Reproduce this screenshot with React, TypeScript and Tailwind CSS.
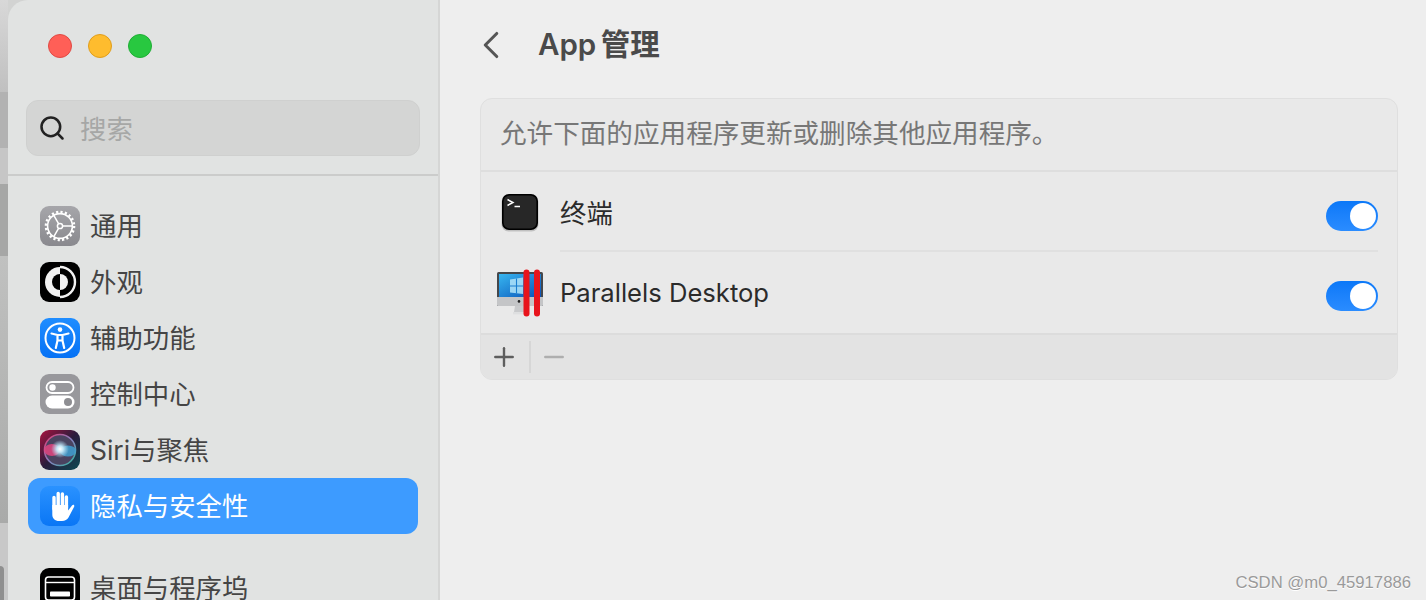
import { Search, ChevronLeft, Plus, Minus } from 'lucide-react';
import type { ReactNode } from 'react';

const GearIcon = () => (
  <svg viewBox="0 0 40 40" className="h-10 w-10">
    <defs>
      <linearGradient id="gearBg" x1="0" y1="0" x2="0" y2="1">
        <stop offset="0" stopColor="#a6a6aa" />
        <stop offset="1" stopColor="#89898e" />
      </linearGradient>
    </defs>
    <rect width="40" height="40" rx="9" fill="url(#gearBg)" />
    <circle cx="20" cy="20" r="14" fill="none" stroke="#fff" strokeWidth="2.6" strokeDasharray="2.2 2.2" />
    <circle cx="20" cy="20" r="12.4" fill="none" stroke="#fff" strokeWidth="1.6" />
    <circle cx="20" cy="20" r="2.6" fill="none" stroke="#fff" strokeWidth="1.5" />
    <path d="M22.6 20H32M18.7 17.8L13.8 9.3M18.7 22.2L13.8 30.7" stroke="#fff" strokeWidth="1.5" />
  </svg>
);

const AppearanceIcon = () => (
  <svg viewBox="0 0 40 40" className="h-10 w-10">
    <rect width="40" height="40" rx="9" fill="#000" />
    <path d="M20 5a15 15 0 0 0 0 30z" fill="#f2f2f2" />
    <path d="M20 12a8 8 0 0 0 0 16z" fill="#000" />
    <path d="M20 12a8 8 0 0 1 0 16z" fill="#f2f2f2" />
    <path d="M20 5a15 15 0 0 1 0 30" fill="none" stroke="#f2f2f2" strokeWidth="2.4" />
  </svg>
);

const AccessibilityIcon = () => (
  <svg viewBox="0 0 40 40" className="h-10 w-10">
    <defs>
      <linearGradient id="accessBg" x1="0" y1="0" x2="0" y2="1">
        <stop offset="0" stopColor="#1f8dff" />
        <stop offset="1" stopColor="#0672f5" />
      </linearGradient>
    </defs>
    <rect width="40" height="40" rx="9" fill="url(#accessBg)" />
    <circle cx="20" cy="20" r="14.5" fill="none" stroke="#fff" strokeWidth="2" />
    <circle cx="20" cy="11.6" r="2.3" fill="#fff" />
    <path d="M11.5 15.5L17.5 17V22.5L15.8 30M28.5 15.5L22.5 17V22.5L24.2 30M17.5 17H22.5V22.5H17.5" fill="none" stroke="#fff" strokeWidth="2.2" strokeLinecap="round" strokeLinejoin="round" />
  </svg>
);

const ControlIcon = () => (
  <svg viewBox="0 0 40 40" className="h-10 w-10">
    <rect width="40" height="40" rx="9" fill="#98989c" />
    <rect x="6.5" y="8" width="27" height="11" rx="5.5" fill="none" stroke="#fff" strokeWidth="1.8" />
    <circle cx="12.5" cy="13.5" r="3.2" fill="#fff" />
    <rect x="5.5" y="21.5" width="29" height="13" rx="6.5" fill="#fff" />
    <circle cx="28" cy="28" r="4" fill="#8e8e92" />
  </svg>
);

const SiriIcon = () => (
  <svg viewBox="0 0 40 40" className="h-10 w-10">
    <defs>
      <linearGradient id="siriBg" x1="0" y1="0" x2="1" y2="1">
        <stop offset="0" stopColor="#a8123f" />
        <stop offset="0.5" stopColor="#2a1c3c" />
        <stop offset="1" stopColor="#0c4a52" />
      </linearGradient>
      <radialGradient id="siriCore">
        <stop offset="0" stopColor="#ffffff" />
        <stop offset="0.35" stopColor="#c4e6f5" />
        <stop offset="1" stopColor="#a9d8ee" stopOpacity="0" />
      </radialGradient>
      <linearGradient id="siriRing" x1="0" y1="0" x2="1" y2="1">
        <stop offset="0" stopColor="#e0386e" />
        <stop offset="0.5" stopColor="#8a7fc0" />
        <stop offset="1" stopColor="#2fb89a" />
      </linearGradient>
    </defs>
    <rect width="40" height="40" rx="9" fill="url(#siriBg)" />
    <circle cx="20" cy="20" r="15.5" fill="#4a4360" stroke="url(#siriRing)" strokeWidth="1.6" />
    <ellipse cx="12" cy="20" rx="8" ry="6" fill="#e2447f" opacity="0.85" />
    <ellipse cx="28" cy="21" rx="8" ry="5.5" fill="#3f9fd0" opacity="0.85" />
    <circle cx="20" cy="19" r="9" fill="url(#siriCore)" />
  </svg>
);

const HandIcon = () => (
  <svg viewBox="0 0 40 40" className="h-10 w-10">
    <defs>
      <linearGradient id="handBg" x1="0" y1="0" x2="0" y2="1">
        <stop offset="0" stopColor="#2a92ff" />
        <stop offset="1" stopColor="#0a76f5" />
      </linearGradient>
    </defs>
    <rect width="40" height="40" rx="9" fill="url(#handBg)" />
    <path d="M14 23V11.5M18.2 21V7.5M22.4 21V8M26.4 22V11" stroke="#fff" strokeWidth="3.4" strokeLinecap="round" />
    <path d="M12.3 19H28.1V24.5L32 19.5C33.4 18 35 19.2 34 21L28.5 31.5C27.2 33.8 25 35 22 35H19C15 35 12.3 32.5 12.3 28.5Z" fill="#fff" />
  </svg>
);

const DockIcon = () => (
  <svg viewBox="0 0 40 40" className="h-10 w-10">
    <rect width="40" height="40" rx="9" fill="#000" />
    <rect x="5.5" y="9" width="29" height="23" rx="3" fill="none" stroke="#fff" strokeWidth="1.6" />
    <path d="M5.5 14.5H34.5" stroke="#fff" strokeWidth="1.4" />
    <rect x="10" y="23.5" width="20" height="5" rx="0.8" fill="#fff" />
  </svg>
);

const TerminalIcon = () => (
  <svg viewBox="0 0 40 40" className="mt-1 h-10 w-10">
    <rect x="1.5" y="2.5" width="37" height="36" rx="7" fill="#8d8d8d" opacity="0.45" />
    <rect x="2" y="1" width="36" height="36" rx="7" fill="#000" />
    <rect x="3.6" y="2.6" width="32.8" height="32.8" rx="6" fill="#272727" />
    <path d="M7.5 6.5L13 9.5L7.5 12.5" fill="none" stroke="#fff" strokeWidth="1.5" />
    <path d="M14.5 13.5H20" stroke="#fff" strokeWidth="1.5" />
  </svg>
);

const ParallelsIcon = () => (
  <svg viewBox="0 0 46 48" className="h-12 w-[46px]">
    <defs>
      <linearGradient id="pdScreen" x1="0" y1="0" x2="1" y2="1">
        <stop offset="0" stopColor="#37b6f0" />
        <stop offset="1" stopColor="#0a52b8" />
      </linearGradient>
    </defs>
    <rect x="0" y="3" width="46" height="34" rx="1.5" fill="#45474b" />
    <rect x="2" y="5" width="42" height="23" fill="url(#pdScreen)" />
    <path d="M0 28H46V35.5a1.5 1.5 0 0 1-1.5 1.5H1.5A1.5 1.5 0 0 1 0 35.5Z" fill="#c4c5c7" />
    <circle cx="22" cy="32.4" r="1.3" fill="#222" />
    <path d="M18 37H27V43H17Z" fill="#c9cacc" />
    <rect x="16" y="43" width="14" height="2.4" fill="#dedfe0" />
    <path d="M13 10.5L26 8.5V25L13 23.5Z" fill="#a8dff7" opacity="0.9" />
    <path d="M19.5 9.5V24.5M13 17H26" stroke="#1a7fd0" strokeWidth="1.1" />
    <rect x="26.5" y="0.5" width="6" height="47" rx="3" fill="#e8141c" />
    <rect x="37" y="0.5" width="6" height="47" rx="3" fill="#e8141c" />
  </svg>
);

type NavItem = { label: string; icon: ReactNode; active?: boolean };

const navItems: NavItem[] = [
  { label: '通用', icon: <GearIcon /> },
  { label: '外观', icon: <AppearanceIcon /> },
  { label: '辅助功能', icon: <AccessibilityIcon /> },
  { label: '控制中心', icon: <ControlIcon /> },
  { label: 'Siri与聚焦', icon: <SiriIcon /> },
  { label: '隐私与安全性', icon: <HandIcon />, active: true },
];

const NavRow = ({ item }: { item: NavItem }) => (
  <div
    className={`flex h-14 shrink-0 items-center gap-2.5 rounded-xl pl-3 text-[26.4px] ${
      item.active ? 'bg-[#3d9bff] text-white' : 'text-[#454545]'
    }`}
  >
    {item.icon}
    <span className="pt-px leading-none">{item.label}</span>
  </div>
);

const Toggle = ({ className }: { className: string }) => (
  <div className={`flex h-[30px] w-[52px] items-center justify-end rounded-full bg-gradient-to-b from-[#0a78f8] to-[#2a8cff] pr-[2px] ${className}`}>
    <div className="h-[26px] w-[26px] rounded-full bg-white" />
  </div>
);

export default function App() {
  return (
    <div className="flex h-[600px] w-[1426px] overflow-hidden bg-[#d2d3d2] [font-family:Inter,'Noto_Sans_CJK_SC',sans-serif]">
      {/* desktop showing behind the window */}
      <div className="flex w-2 shrink-0 flex-col">
        <div className="h-[92px] bg-gradient-to-b from-[#d8d8d8] to-[#c0c0c0]" />
        <div className="h-14 bg-[#b2b2b2]" />
        <div className="h-9 bg-[#c6c6c6]" />
        <div className="h-[72px] bg-[#a6a7a6]" />
        <div className="h-[267px] bg-gradient-to-b from-[#c0c1c0] to-[#a9aaa9]" />
        <div className="flex flex-1 flex-col justify-end bg-[#c8c8c8]">
          <div className="h-[34px] w-1 rounded-tr-md bg-[#8f8f8f]" />
        </div>
      </div>

      <aside className="flex w-[432px] shrink-0 flex-col overflow-hidden rounded-tl-[20px] border-r-2 border-[#d5d6d5] bg-[#e1e3e2]">
        <div className="flex h-[92px] shrink-0 items-center gap-4 pl-10">
          <div className="h-6 w-6 rounded-full border border-[#e04a44] bg-[#ff5f57]" />
          <div className="h-6 w-6 rounded-full border border-[#e09e1c] bg-[#febc2e]" />
          <div className="h-6 w-6 rounded-full border border-[#1fae35] bg-[#28c840]" />
        </div>
        <div className="ml-[18px] mt-2 flex h-14 w-[394px] shrink-0 items-center gap-[14px] rounded-xl border border-[#cfd0cf] bg-[#d4d5d4] pl-[11px]">
          <Search size={28} strokeWidth={2.2} className="text-[#222]" />
          <span className="pt-0.5 text-[26.4px] leading-none text-[#a6a7a6]">搜索</span>
        </div>
        <div className="mt-[18px] h-0.5 shrink-0 bg-[#cbcccb]" />
        <nav className="ml-5 mt-[22px] flex w-[390px] flex-col">
          {navItems.map((item) => (
            <NavRow key={item.label} item={item} />
          ))}
          <div className="mt-[26px]">
            <NavRow item={{ label: '桌面与程序坞', icon: <DockIcon /> }} />
          </div>
        </nav>
      </aside>

      <main className="relative min-w-0 flex-1 bg-[#eeeeee]">
        <header className="flex h-[98px] items-center pb-[8px] pl-[28px]">
          <ChevronLeft size={46} strokeWidth={1.6} className="text-[#555]" />
          <h1 className="ml-6 text-[29.5px] font-semibold leading-none text-[#4a4a4a] [word-spacing:-3px]">App 管理</h1>
        </header>

        <section className="ml-10 w-[918px] overflow-hidden rounded-xl border border-[#dfdfdf] bg-[#e9e9e9]">
          <p className="flex h-[73px] items-center border-b-2 border-[#dedede] pb-0.5 pl-[19px] text-[26.6px] leading-none text-[#777]">
            允许下面的应用程序更新或删除其他应用程序。
          </p>
          <div className="flex h-[78px] items-center pl-[19px] pr-[19px]">
            <TerminalIcon />
            <span className="ml-5 flex-1 pt-1 text-[26.4px] leading-none text-[#2b2b2b]">终端</span>
            <Toggle className="mt-[10px]" />
          </div>
          <div className="ml-[79px] mr-[19px] h-0.5 bg-[#e0e0e0]" />
          <div className="flex h-[83px] items-center border-b-2 border-[#dcdcdc] pl-4 pr-[19px]">
            <ParallelsIcon />
            <span className="ml-[17px] flex-1 text-[25.6px] leading-none text-[#2b2b2b]">Parallels Desktop</span>
            <Toggle className="mt-[7px]" />
          </div>
          <div className="flex h-[44px] items-center bg-[#e3e3e3] pl-2">
            <Plus size={30} strokeWidth={1.9} className="text-[#5e5e5e]" />
            <div className="ml-2.5 h-8 w-0.5 bg-[#d6d6d6]" />
            <Minus size={30} strokeWidth={1.9} className="ml-2 text-[#aeaeae]" />
          </div>
        </section>

        <span className="absolute bottom-[7px] right-[15px] text-[16.7px] leading-5 text-[#9a9a9a] [font-family:'Liberation_Sans',sans-serif] [text-shadow:0_1px_0_#fff]">
          CSDN @m0_45917886
        </span>
      </main>
    </div>
  );
}
